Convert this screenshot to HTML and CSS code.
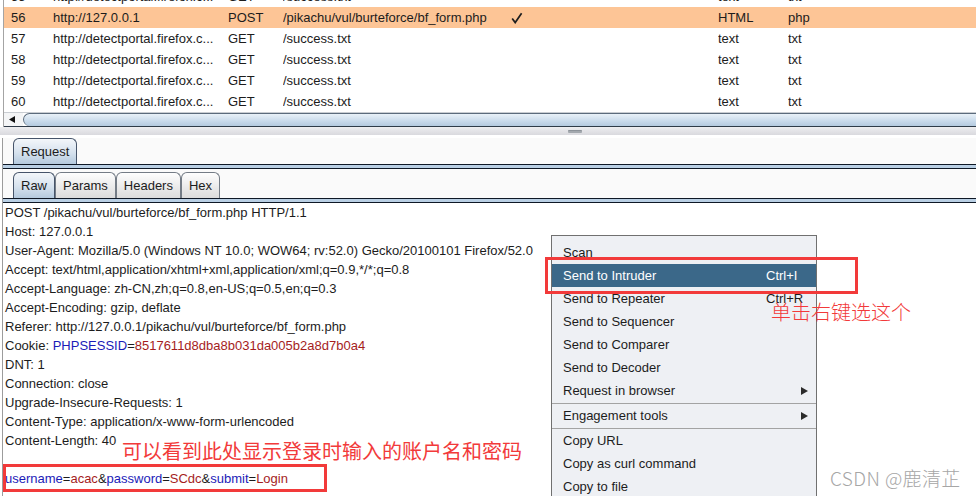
FILE: index.html
```html
<!DOCTYPE html>
<html lang="en">
<head>
<meta charset="UTF-8">
<title>Proxy history</title>
<link rel="stylesheet" href="styles.css">
</head>
<body>
<div class="screen">
  <div class="history">
    <div class="rows">
      <div class="row first"><span>55</span><span>http://detectportal.firefox.c...</span><span>GET</span><span>/success.txt</span><span></span><span>text</span><span>txt</span></div>
      <div class="row sel"><span>56</span><span>http://127.0.0.1</span><span>POST</span><span>/pikachu/vul/burteforce/bf_form.php</span><span class="chk"><svg width="12" height="12" viewBox="0 0 12 12"><path d="M1.2 6.4 L4.2 10.6 L10.6 1.2" fill="none" stroke="#1e1e1e" stroke-width="1.7"/></svg></span><span>HTML</span><span>php</span></div>
      <div class="row"><span>57</span><span>http://detectportal.firefox.c...</span><span>GET</span><span>/success.txt</span><span></span><span>text</span><span>txt</span></div>
      <div class="row"><span>58</span><span>http://detectportal.firefox.c...</span><span>GET</span><span>/success.txt</span><span></span><span>text</span><span>txt</span></div>
      <div class="row"><span>59</span><span>http://detectportal.firefox.c...</span><span>GET</span><span>/success.txt</span><span></span><span>text</span><span>txt</span></div>
      <div class="row"><span>60</span><span>http://detectportal.firefox.c...</span><span>GET</span><span>/success.txt</span><span></span><span>text</span><span>txt</span></div>
    </div>
    <div class="hscroll">
      <span class="arrow-btn"><svg width="6" height="7" viewBox="0 0 6 7"><path d="M0 3.5 L6 0 L6 7 Z" fill="#111"/></svg></span>
      <span class="thumb"></span>
    </div>
  </div>

  <div class="splitter"><span class="grip"></span></div>

  <div class="lower">
    <div class="tabbar top"><span class="tab on">Request</span></div>
    <div class="rule"></div>
    <div class="tabbar sub">
      <span class="tab on">Raw</span><span class="tab">Params</span><span class="tab">Headers</span><span class="tab">Hex</span>
    </div>
    <div class="rule"></div>
<pre class="editor">POST /pikachu/vul/burteforce/bf_form.php HTTP/1.1
Host: 127.0.0.1
User-Agent: Mozilla/5.0 (Windows NT 10.0; WOW64; rv:52.0) Gecko/20100101 Firefox/52.0
Accept: text/html,application/xhtml+xml,application/xml;q=0.9,*/*;q=0.8
Accept-Language: zh-CN,zh;q=0.8,en-US;q=0.5,en;q=0.3
Accept-Encoding: gzip, deflate
Referer: http://127.0.0.1/pikachu/vul/burteforce/bf_form.php
Cookie: <span class="k">PHPSESSID</span>=<span class="v">8517611d8dba8b031da005b2a8d7b0a4</span>
DNT: 1
Connection: close
Upgrade-Insecure-Requests: 1
Content-Type: application/x-www-form-urlencoded
Content-Length: 40

<span class="k">username</span>=<span class="v">acac</span>&amp;<span class="k">password</span>=<span class="v">SCdc</span>&amp;<span class="k">submit</span>=<span class="v">Login</span></pre>
  </div>

  <ul class="ctx-menu">
    <li class="item">Scan</li>
    <li class="item hot"><span>Send to Intruder</span><span class="key">Ctrl+I</span></li>
    <li class="item"><span>Send to Repeater</span><span class="key">Ctrl+R</span></li>
    <li class="item">Send to Sequencer</li>
    <li class="item">Send to Comparer</li>
    <li class="item">Send to Decoder</li>
    <li class="item"><span>Request in browser</span><span class="sub-arrow"></span></li>
    <li class="sep"></li>
    <li class="item"><span>Engagement tools</span><span class="sub-arrow"></span></li>
    <li class="sep"></li>
    <li class="item">Copy URL</li>
    <li class="item">Copy as curl command</li>
    <li class="item">Copy to file</li>
  </ul>

  <div class="mark box-menu"></div>
  <p class="note note-menu">单击右键选这个</p>
  <p class="note note-body">可以看到此处显示登录时输入的账户名和密码</p>
  <div class="mark box-body"></div>
  <p class="watermark">CSDN @鹿清芷</p>
</div>
</body>
</html>
```

FILE: styles.css
```css
:root{
  --ink: #1c1c1c;
  --line: #a4a4a4;
  --sel: #fdc596;
  --navy: #0e1826;
  --band: #b9cfe4;
  --panel: #fafafa;
  --menu-bg: #eef0f4;
  --menu-hot: #3b6889;
  --red: #f23a3a;
  --ui: "Liberation Sans", Arial, sans-serif;
  --cjk: "Noto Sans CJK SC", "Noto Sans", sans-serif;
}
*{ box-sizing: border-box; }
html,body{
  margin:0; padding:0; background:#fff; color:var(--ink);
  font-family: var(--ui); font-size: 13px;
  width: 976px; height: 496px; overflow: hidden;
}
.screen{ position: relative; width: 976px; height: 496px; overflow: hidden; }

/* history table */
.history{ margin-left: 3px; border-left: 1px solid var(--line); }
.rows{ height: 112px; overflow: hidden; }
.row{
  display: grid; grid-template-columns: 42px 175px 55px 230px 205px 70px 1fr;
  height: 21px; line-height: 21px; padding-left: 7px; white-space: nowrap;
}
.row.first{ margin-top: -14px; }
.row.sel{ background: var(--sel); }
.row span{ overflow: hidden; }
.row .chk{ display: flex; align-items: center; margin-left: -2px; }

.hscroll{
  display: flex; height: 15px;
  border-top: 1px solid #c9cdd2; border-bottom: 1px solid #2f3b48;
}
.arrow-btn{
  width: 19px; display: flex; align-items: center; justify-content: center;
  background: #f4f5f6; padding-right: 3px;
}
.thumb{
  flex: 1; border: 1px solid #5b6b7c; border-right: none; border-bottom: none;
  border-radius: 7px 0 0 7px;
  background: linear-gradient(#e9f1f8, #cbdcec 55%, #b4cadf);
}

.splitter{
  height: 8px; background: linear-gradient(#eeeef0, #d9d9de);
  display: flex; align-items: center;
}
.grip{
  width: 14px; height: 3px; margin-left: 568px; border-radius: 1px;
  background: #a3a8ae; border-top: 1px solid #8c9299;
}

/* request pane */
.lower{ margin-left: 2px; border-left: 1px solid #9c9c9c; background: var(--panel); }
.tabbar{ display: flex; padding-left: 10px; height: 26px; }
.tabbar.top{ margin-top: 3px; }
.tabbar.sub{ margin-top: 3px; }
.tab{
  height: 26px; line-height: 25px; padding: 0 7px;
  border: 1px solid #747c86; border-bottom: none; border-radius: 6px 6px 0 0;
  background: linear-gradient(#fefefe, #e9e9e9 60%, #dcdcdc);
  color: var(--ink);
}
.tab.on{
  border-color: #46546a;
  background: linear-gradient(#f3f6fa, #d6e2ee 55%, #b5cade);
}
.rule{
  height: 5px; background: var(--band);
  border-top: 1px solid var(--navy); border-bottom: 1px solid var(--navy);
}
.editor{
  margin: 0; padding: 0 0 0 2px; background: #fff;
  font-family: var(--ui); font-size: 13px; line-height: 19px; color: var(--ink);
  height: 300px;
}
.editor .k{ color: #1b1bb8; }
.editor .v{ color: #a51d1d; }

/* context menu */
.ctx-menu{
  position: absolute; left: 551px; top: 235px; width: 266px;
  margin: 0; padding: 5px 0 0; list-style: none;
  background: var(--menu-bg); border: 1px solid #707070;
}
.ctx-menu .item{
  display: flex; align-items: center; height: 23px; padding-left: 11px;
  color: var(--ink);
}
.ctx-menu .item > span:first-child{ flex: 1; }
.ctx-menu .item.hot{ background: var(--menu-hot); color: #fff; }
.ctx-menu .key{ width: 50px; }
.ctx-menu .sub-arrow{
  width: 0; height: 0; margin-right: 8px;
  border-left: 7px solid #2b2b2b; border-top: 4px solid transparent; border-bottom: 4px solid transparent;
}
.ctx-menu .sep{ height: 1px; margin-top: 1px; background: #a3a3a3; }

/* annotations drawn over the screenshot */
.mark{ position: absolute; border: 3px solid var(--red); }
.box-menu{ left: 545px; top: 257px; width: 313px; height: 37px; }
.box-body{ left: 3px; top: 464px; width: 324px; height: 28px; }
.note{
  position: absolute; margin: 0; font-family: var(--cjk); font-size: 20px; line-height: 1;
  color: var(--red); white-space: nowrap;
}
.note-menu{ left: 771px; top: 302px; font-weight: 300; }
.note-body{ left: 122px; top: 441px; }
.watermark{
  position: absolute; left: 830px; top: 468px; margin: 0;
  font-family: var(--cjk); font-size: 19px; line-height: 1; font-weight: 300;
  letter-spacing: 0.4px; color: #a6a6a6; white-space: nowrap;
}
```
